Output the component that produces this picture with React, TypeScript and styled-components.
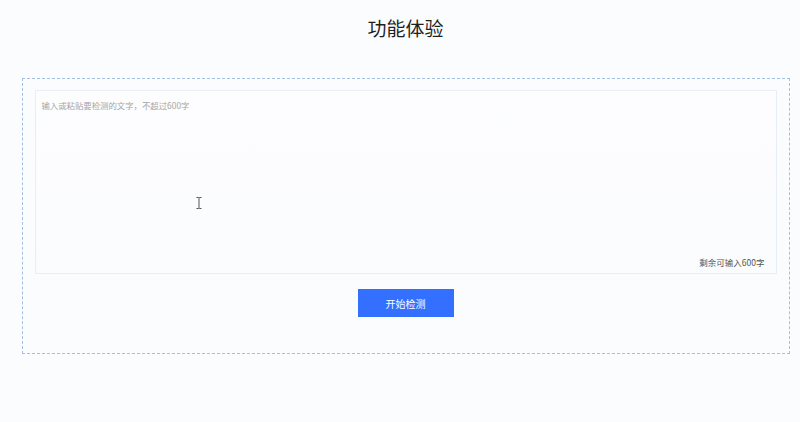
import styled, { createGlobalStyle } from 'styled-components';

const GlobalStyle = createGlobalStyle`
  html, body {
    margin: 0;
    padding: 0;
    background: #fbfcfe;
    font-family: "Noto Sans CJK SC", "Microsoft YaHei", sans-serif;
  }
`;

const Page = styled.div`
  width: 800px;
  height: 422px;
  display: flex;
  flex-direction: column;
  align-items: center;
  box-sizing: border-box;
  padding: 14px 0 0 11px;
  position: relative;
`;

const Title = styled.h2`
  margin: 0;
  font-size: 19px;
  font-weight: 400;
  color: #1f1f1f;
  line-height: 28px;
`;

const DemoBox = styled.div`
  margin-top: 36px;
  width: 768px;
  height: 276px;
  box-sizing: border-box;
  border: 1px dashed #a3c0e4;
  padding: 11px 12px 0;
  display: flex;
  flex-direction: column;
  align-items: center;
`;

const InputWrap = styled.div`
  width: 100%;
  height: 184px;
  box-sizing: border-box;
  border: 1px solid #e8eef6;
  background: linear-gradient(180deg, #fdfdfe 0%, #fbfcfe 100%);
  display: flex;
  flex-direction: column;
`;

const TextArea = styled.textarea`
  flex: 1;
  border: none;
  outline: none;
  resize: none;
  background: transparent;
  padding: 8px 6px;
  font-family: inherit;
  font-size: 8.4px;
  color: #333;

  &::placeholder {
    color: #a5a5a5;
  }
`;

const Counter = styled.div`
  align-self: flex-end;
  font-size: 8.5px;
  color: #555;
  padding: 0 11px 5px 0;
`;

const StartButton = styled.button`
  margin-top: 15px;
  width: 96px;
  height: 28px;
  border: none;
  background: #3370ff;
  color: #fff;
  font-family: inherit;
  font-size: 10px;
  cursor: pointer;
`;

const Cursor = styled.svg`
  position: absolute;
  left: 196px;
  top: 197px;
`;

export default function App() {
  return (
    <>
      <GlobalStyle />
      <Page>
        <Title>功能体验</Title>
        <DemoBox>
          <InputWrap>
            <TextArea placeholder="输入或粘贴要检测的文字，不超过600字" />
            <Counter>剩余可输入600字</Counter>
          </InputWrap>
          <StartButton>开始检测</StartButton>
        </DemoBox>
        <Cursor width="6" height="12" viewBox="0 0 6 12">
          <path d="M0.5 0.5h2l0.5 0.5l0.5-0.5h2M3 1v10M0.5 11.5h2l0.5-0.5l0.5 0.5h2" stroke="#555" strokeWidth="1" fill="none" />
        </Cursor>
      </Page>
    </>
  );
}
